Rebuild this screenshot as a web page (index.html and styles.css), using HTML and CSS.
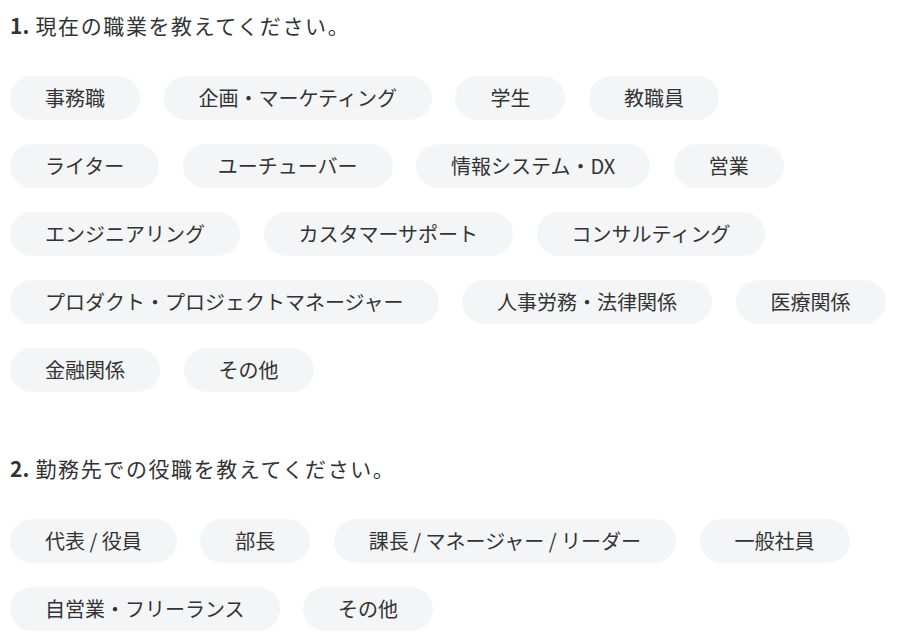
FILE: index.html
```html
<!DOCTYPE html>
<html lang="ja">
<head>
    <meta charset="UTF-8">
    <title>アンケート</title>
    <link rel="stylesheet" href="styles.css">
</head>
<body>
    <div class="question">
        <h2 class="question-title"><span class="num">1.</span> 現在の職業を教えてください。</h2>
        <div class="choices">
            <button class="chip">事務職</button>
            <button class="chip">企画・マーケティング</button>
            <button class="chip">学生</button>
            <button class="chip">教職員</button>
            <button class="chip">ライター</button>
            <button class="chip">ユーチューバー</button>
            <button class="chip">情報システム・DX</button>
            <button class="chip">営業</button>
            <button class="chip">エンジニアリング</button>
            <button class="chip">カスタマーサポート</button>
            <button class="chip">コンサルティング</button>
            <button class="chip">プロダクト・プロジェクトマネージャー</button>
            <button class="chip">人事労務・法律関係</button>
            <button class="chip">医療関係</button>
            <button class="chip">金融関係</button>
            <button class="chip">その他</button>
        </div>
    </div>

    <div class="question">
        <h2 class="question-title"><span class="num">2.</span> 勤務先での役職を教えてください。</h2>
        <div class="choices">
            <button class="chip">代表 / 役員</button>
            <button class="chip">部長</button>
            <button class="chip">課長 / マネージャー / リーダー</button>
            <button class="chip">一般社員</button>
            <button class="chip">自営業・フリーランス</button>
            <button class="chip">その他</button>
        </div>
    </div>
</body>
</html>
```

FILE: styles.css
```css
body {
    margin: 0;
    padding: 9px 10px 0;
    font-family: "Noto Sans CJK JP", "Noto Sans", sans-serif;
    color: #333;
    background: #fff;
}

.question {
    max-width: 878px;
    margin-bottom: 60px;
}

.question:last-child {
    margin-bottom: 0;
}

.question-title {
    font-size: 21px;
    font-weight: normal;
    line-height: 32px;
    margin: 0 0 35px;
    letter-spacing: 1.6px;
}

.question-title .num {
    font-weight: bold;
    letter-spacing: 0;
}

.choices {
    display: flex;
    flex-wrap: wrap;
    column-gap: 23.5px;
    row-gap: 24px;
}

.chip {
    font-family: inherit;
    font-size: 20px;
    line-height: 24px;
    height: 44px;
    padding: 0 35px;
    border: none;
    border-radius: 22px;
    background-color: #f4f5f7;
    color: #333;
    cursor: pointer;
}

.chip:hover {
    background-color: #e9ebef;
}
```
